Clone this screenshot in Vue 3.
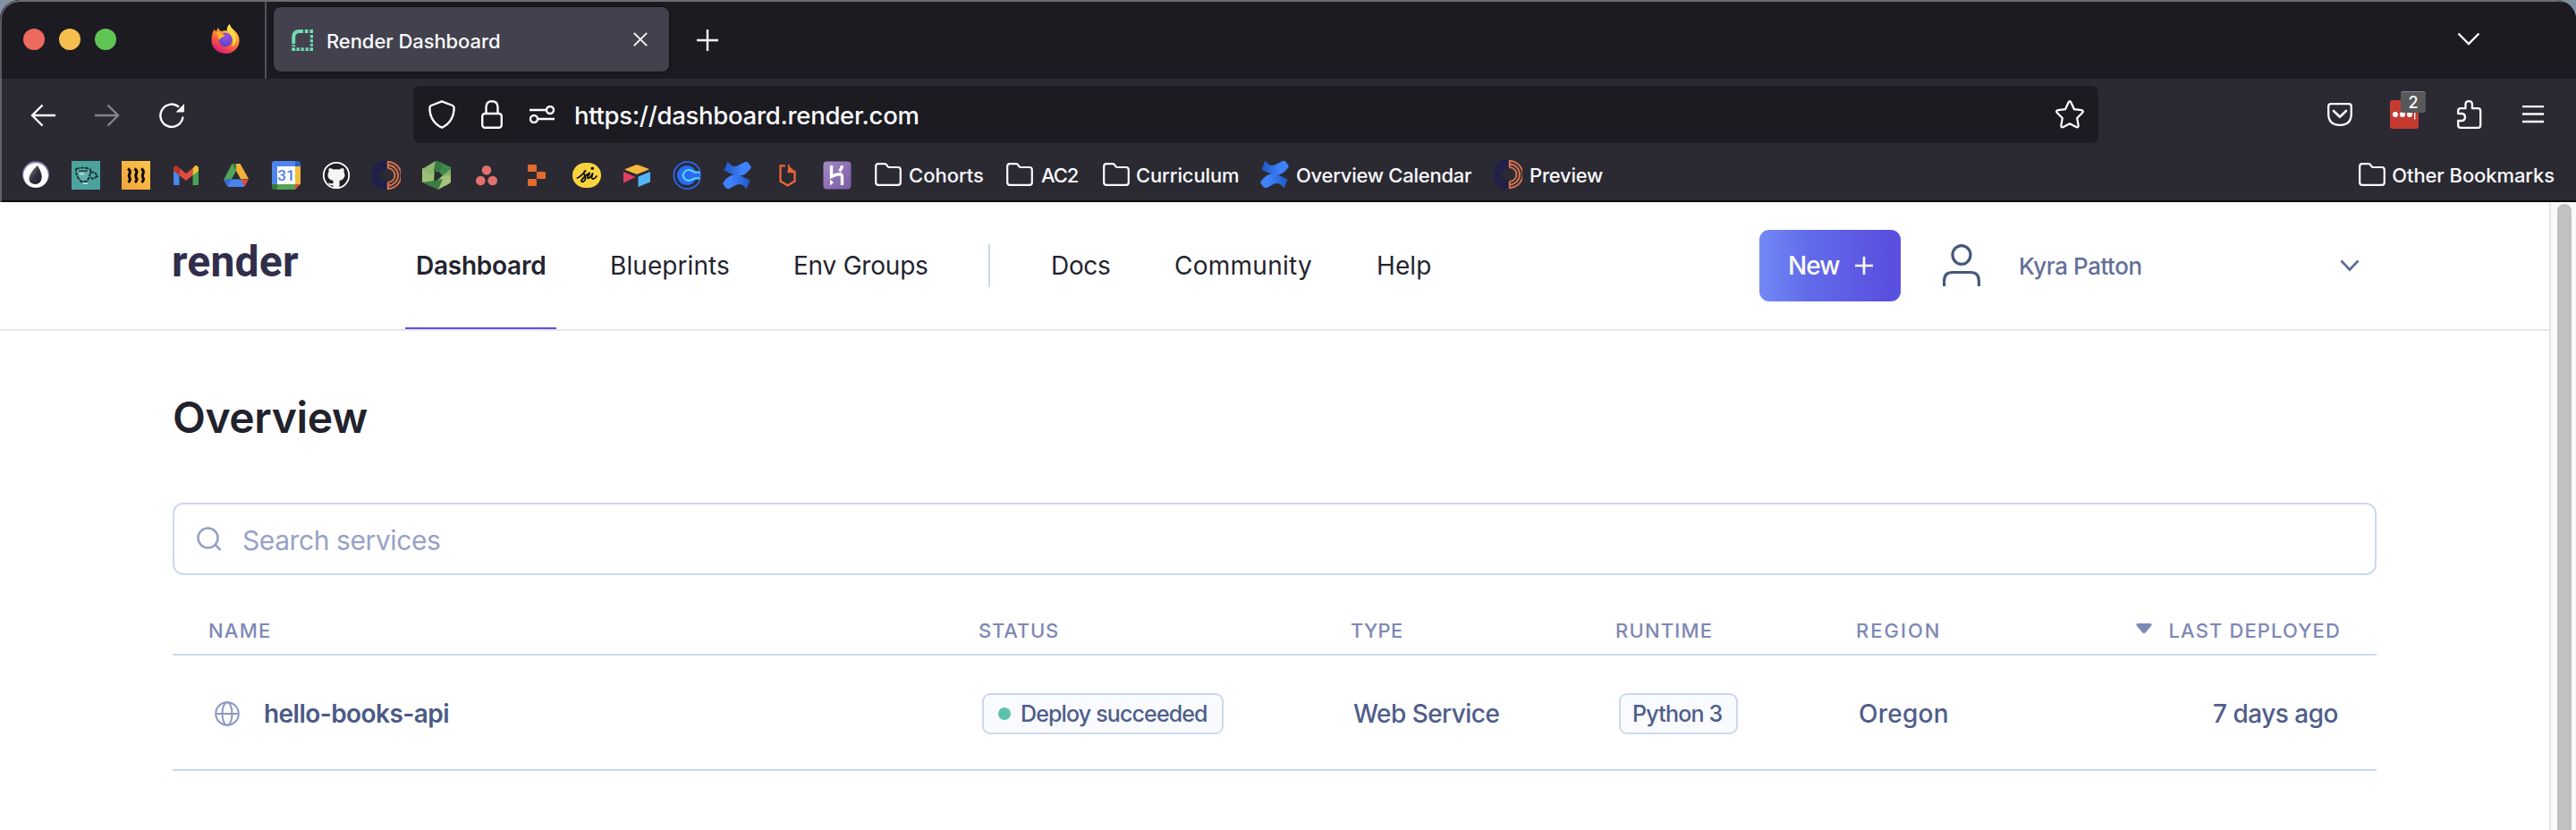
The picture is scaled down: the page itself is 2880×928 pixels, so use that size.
<script setup>
const primaryNav = [
  { label: 'Dashboard', cls: 'dashboard', active: true },
  { label: 'Blueprints', cls: 'blueprints' },
  { label: 'Env Groups', cls: 'groups' },
]
const secondaryNav = [
  { label: 'Docs', cls: 'docs' },
  { label: 'Community', cls: 'community' },
  { label: 'Help', cls: 'help' },
]
const columns = [
  { label: 'NAME', cls: 'h-name' },
  { label: 'STATUS', cls: 'h-status' },
  { label: 'TYPE', cls: 'h-type' },
  { label: 'RUNTIME', cls: 'h-runtime' },
  { label: 'REGION', cls: 'h-region' },
]
const services = [
  { name: 'hello-books-api', status: 'Deploy succeeded', type: 'Web Service', runtime: 'Python 3', region: 'Oregon', deployed: '7 days ago' },
]
const folders = [
  { label: 'Cohorts', cls: 'f-cohorts' },
  { label: 'AC2', cls: 'f-ac2' },
  { label: 'Curriculum', cls: 'f-curriculum' },
]
</script>

<template>
  <div class="window">
    <svg class="defs" width="0" height="0" aria-hidden="true">
      <defs>
        <linearGradient id="flame" x1=".8" y1="0" x2=".3" y2="1">
          <stop offset="0" stop-color="#fff44f" /><stop offset=".35" stop-color="#ffa436" />
          <stop offset=".65" stop-color="#ff5a3c" /><stop offset="1" stop-color="#d4157f" />
        </linearGradient>
        <radialGradient id="globe" cx=".55" cy=".3" r=".8">
          <stop offset="0" stop-color="#a04fe8" /><stop offset="1" stop-color="#4a43c4" />
        </radialGradient>
        <linearGradient id="confA" x1="0" y1="0" x2="1" y2="0"><stop offset="0" stop-color="#2058c8" /><stop offset=".7" stop-color="#3f83fb" /></linearGradient>
        <linearGradient id="confB" x1="1" y1="0" x2="0" y2="0"><stop offset="0" stop-color="#2058c8" /><stop offset=".7" stop-color="#3f83fb" /></linearGradient>
        <linearGradient id="amber" x1="1" y1="0" x2="0" y2="1"><stop offset="0" stop-color="#fbc54a" /><stop offset="1" stop-color="#f3a43c" /></linearGradient>
        <linearGradient id="drop" x1="0" y1="0" x2="1" y2="1"><stop offset="0" stop-color="#8a8a9a" /><stop offset=".5" stop-color="#32323f" /><stop offset="1" stop-color="#1c1c26" /></linearGradient>
        <linearGradient id="violet" x1="0" y1="0" x2="1" y2="1"><stop offset="0" stop-color="#a48ac6" /><stop offset="1" stop-color="#7a5aa2" /></linearGradient>
        <g id="confluence">
          <path d="M5.500 .5C10 7 14 7 19 4L25 1C28 0 30 4 32 7C27 15 20 19 12 15.500L1.500 10.500Z" fill="url(#confA)" />
          <path d="M26.500 31.500C22 25 18 25 13 28L7 31C4 32 2 28 0 25C5 17 12 13 20 16.500L30.500 21.500Z" fill="url(#confB)" />
        </g>
        <g id="rings" fill="none" stroke-width="1.900">
          <g stroke="#1b1b58"><path d="M15 1A15 15 0 0 0 15 31M15 4.500A11.500 11.500 0 0 0 15 27.500M15 8A8 8 0 0 0 15 24" /><path d="M14.600 0V8M14.600 24V32" /></g>
          <g stroke="#d9734f"><path d="M17.500 1A15 15 0 0 1 17.500 31M17.500 4.500A11.500 11.500 0 0 1 17.500 27.500M17.500 8A8 8 0 0 1 17.500 24" /><path d="M17.800 0V8M17.800 24V32" /></g>
        </g>
        <path id="folder" d="M4 1.200H11Q12.500 1.200 13.300 2.500L14.600 4.300Q15.100 5 16 5H26Q28.800 5 28.800 8V22Q28.800 24.800 26 24.800H4Q1.200 24.800 1.200 22V4Q1.200 1.200 4 1.200Z" fill="none" stroke="#fbfbfe" stroke-width="2.200" />
      </defs>
    </svg>

    <div class="tabstrip">
      <i class="light red"></i><i class="light yellow"></i><i class="light green"></i>
      <svg class="firefox" width="34" height="34" viewBox="0 0 34 34">
        <path d="M4.500 6Q6 7 7 8.500Q7 6 9 4Q10 8 13.500 8Q17 6 19 8Q18 4 21.500 0Q23 4 27 7Q33 12 32.500 19A15.500 14.500 0 0 1 17 33A15.500 14.500 0 0 1 1.500 18Q1.500 10 4.500 6Z" fill="url(#flame)" />
        <ellipse cx="17" cy="17.500" rx="7.500" ry="7.800" fill="url(#globe)" />
        <path d="M7 9Q12 9 17 13Q14 13 14 15Q11 15 10.500 18Q8 14 7 9Z" fill="#ffb52e" />
        <path d="M21.500 0Q25 8 28 12Q31 21 24 26Q29 15 19 8Q18 4 21.500 0Z" fill="#ffdc45" />
      </svg>
      <div class="strip-line"></div>
      <div class="tab">
        <svg width="24" height="24" viewBox="0 0 24 24">
          <path d="M2.200 16V9Q2.200 2 9 2H13" fill="none" stroke="#6fdcb4" stroke-width="4" />
          <g fill="#6fdcb4">
            <path d="M14.800 0h3.700v4h-3.700zM20.300 0H24v4h-3.700zM20.800 6H24v3.500h-3.200zM20.800 11H24v3.500h-3.200zM20.800 16H24v2.800h-3.200zM.2 17.200h4v1.800h-4zM.2 20.300h4V24h-4zM5.500 20.300h3.300V24H5.500zM10.500 20.300h3.300V24h-3.300zM15.500 20.300h3.300V24h-3.300zM20.300 20.300H24V24h-3.700z" />
          </g>
        </svg>
        <span class="tab-title">Render Dashboard</span>
        <svg class="tab-close" width="16" height="16" viewBox="0 0 16 16"><path d="M.8.8L15.200 15.200M15.200.8L.8 15.200" stroke="#fbfbfe" stroke-width="1.800" /></svg>
      </div>
      <svg class="new-tab" width="24" height="24" viewBox="0 0 24 24"><path d="M12 0V24M0 12H24" stroke="#fbfbfe" stroke-width="2.400" /></svg>
      <svg class="all-tabs" width="26" height="16" viewBox="0 0 26 16"><path d="M1.500 1.500L13 13L24.500 1.500" fill="none" stroke="#fbfbfe" stroke-width="2.400" /></svg>
    </div>

    <div class="toolbar">
      <svg class="back" width="28" height="26" viewBox="0 0 28 26"><path d="M28 13H2M13.500 1.500L2 13L13.500 24.500" fill="none" stroke="#fbfbfe" stroke-width="2.400" /></svg>
      <svg class="forward" width="28" height="26" viewBox="0 0 28 26"><path d="M0 13H26M14.500 1.500L26 13L14.500 24.500" fill="none" stroke="#85848b" stroke-width="2.400" /></svg>
      <svg class="reload" width="28" height="28" viewBox="0 0 28 28"><path d="M26.500 15.500A12.600 12.600 0 1 1 22 4.500" fill="none" stroke="#fbfbfe" stroke-width="2.400" /><path d="M28 1V9Q28 10.500 26.500 10.500H18.500Z" fill="#fbfbfe" /></svg>
      <div class="urlbar">
        <svg class="shield" width="30" height="32" viewBox="0 0 30 32"><path d="M15 1.300L27 6Q28.600 6.800 28.600 8.500Q28.600 24 15 30.700Q1.400 24 1.400 8.500Q1.400 6.800 3 6Z" fill="none" stroke="#fbfbfe" stroke-width="2.400" stroke-linejoin="round" /></svg>
        <svg class="lock" width="24" height="32" viewBox="0 0 24 32"><path d="M5.500 15V8Q5.500 1.300 12 1.300T18.500 8V15" fill="none" stroke="#fbfbfe" stroke-width="2.400" /><rect x="1.200" y="15" width="21.600" height="15.800" rx="3" fill="none" stroke="#fbfbfe" stroke-width="2.400" /></svg>
        <svg class="perm" width="30" height="20" viewBox="0 0 30 20"><g fill="none" stroke="#fbfbfe" stroke-width="2.400"><path d="M1 5H19M11 15H29" /><circle cx="24" cy="5" r="4" fill="#1c1b22" /><circle cx="6" cy="15" r="4" fill="#1c1b22" /></g></svg>
        <span class="url">https://dashboard.render.com</span>
        <svg class="star" width="32" height="32" viewBox="0 0 32 32"><path d="M14.600 2.500Q16 0 17.400 2.500L21 10.200L29 11.200Q32 12 30 14.200L24.200 20L25.600 28.200Q25.800 31 23.200 30L16 26.200L8.800 30Q6.200 31 6.400 28.200L7.800 20L2 14.200Q0 12 3 11.200L11 10.200Z" fill="none" stroke="#fbfbfe" stroke-width="2.300" stroke-linejoin="round" /></svg>
      </div>
      <svg class="pocket" width="28" height="26" viewBox="0 0 28 26"><path d="M4 1.200H24Q26.800 1.200 26.800 4V12Q26.800 24.800 14 24.800Q1.200 24.800 1.200 12V4Q1.200 1.200 4 1.200Z" fill="none" stroke="#fbfbfe" stroke-width="2.300" /><path d="M7 9L14 15.800L21 9" fill="none" stroke="#fbfbfe" stroke-width="2.600" stroke-linecap="round" stroke-linejoin="round" /></svg>
      <div class="lastpass">
        <svg width="32" height="32" viewBox="0 0 32 32"><rect width="32" height="32" rx="3" fill="#c53b32" /><g fill="#fff"><circle cx="6" cy="16" r="3" /><circle cx="14" cy="16" r="3" /><circle cx="22" cy="16" r="3" /><path d="M27 10.500h1.400v11H27z" /></g></svg>
        <span class="badge">2</span>
      </div>
      <svg class="puzzle" width="28" height="32" viewBox="0 0 28 32"><path d="M4 9.200H9.500V5Q9.500 1.200 13.200 1.200T17 5V9.200H23.500Q26.200 9.200 26.200 12V28Q26.200 30.800 23.500 30.800H4Q1.200 30.800 1.200 28V23H5.500Q9 22.600 9 19T5.500 15H1.200V12Q1.200 9.200 4 9.200Z" fill="none" stroke="#fbfbfe" stroke-width="2.300" stroke-linejoin="round" /></svg>
      <svg class="menu" width="24" height="20" viewBox="0 0 24 20"><path d="M0 1.200H24M0 9.500H24M0 18H24" stroke="#fbfbfe" stroke-width="2.300" /></svg>
    </div>

    <div class="bookmarks">
      <div class="icons">
        <svg viewBox="0 0 32 32"><circle cx="16" cy="16.500" r="15" fill="#17171c" /><circle cx="16" cy="15.300" r="15" fill="#8681b4" /><circle cx="16" cy="16" r="13.800" fill="#fff" /><path d="M18 5Q24 15 22.500 20Q21 26 15 26Q8 25 8.500 19Q10 12 18 5Z" fill="url(#drop)" /></svg>
        <svg viewBox="0 0 32 32"><rect width="32" height="32" fill="#4ca39e" /><path d="M5 9Q13 6 20 9.500L19 19L16 22H11L7 18Z" fill="#62aeaa" /><g fill="none" stroke="#14302f" stroke-width="1.800" stroke-dasharray="4 1"><path d="M5 9Q13 6 21 9.500V14Q19 20 17 23H11Q5 18 5 9Z" /><path d="M21 12L26 13L29 17L24 20L20 18" /></g><path d="M8 11H18" stroke="#1b3a39" stroke-width="1.400" /><path d="M9 14.500H14M13 25H18" stroke="#d6e8e6" stroke-width="1.600" /></svg>
        <svg viewBox="0 0 32 32"><rect width="32" height="32" fill="url(#amber)" /><g fill="none" stroke="#120d04" stroke-width="3"><path d="M7 8.500Q10.500 11 9 14T9 19T7.500 24" /><path d="M14.500 8.500Q18 11 16.500 14T16.500 19T15 24" /><path d="M22 8.500Q25.500 11 24 14T24 19T22.500 24" /></g></svg>
        <svg viewBox="0 0 32 32"><path d="M2 9V25.500Q2 27 3.500 27H8.500V14Z" fill="#4a86ee" /><path d="M30 9V25.500Q30 27 28.500 27H23.500V14Z" fill="#48a355" /><path d="M8.500 8L16 14L23.500 8V16L16 22L8.500 16Z" fill="#e04c3f" /><path d="M2 9Q2 5 5.500 5L8.500 8V16L2 11Z" fill="#bd352c" /><path d="M30 9Q30 5 26.500 5L23.500 8V16L30 11Z" fill="#f5bf37" /></svg>
        <svg viewBox="0 0 32 32"><path d="M11.500 3H16L16 11L6.500 28.500L2 21Z" fill="#4fa558" /><path d="M11.500 3H20.500L16 11Z" fill="#35783d" /><path d="M16 3H20.500L30 20H21L16 11Z" fill="#f2b137" /><path d="M7 20.500H25V29H7L2.500 21Z" fill="#4a84ee" /><path d="M21 20.500H30L25.500 28.500Z" fill="#dc4d3d" /><path d="M2 20.500H11L6.500 28.500Z" fill="#3a6bd6" /></svg>
        <svg viewBox="0 0 32 32"><path d="M3 0H26V6H6V26H0V3Q0 0 3 0Z" fill="#4f86ee" /><path d="M26 0H29Q32 0 32 3V6H26Z" fill="#2a5fc8" /><path d="M26 6H32V26H26Z" fill="#f5bd3f" /><path d="M0 26H6V32H3Q0 32 0 29Z" fill="#2f7a3b" /><path d="M6 26H26V32H6Z" fill="#54a356" /><path d="M26 26H32L26 32Z" fill="#dd4a3c" /><rect x="6" y="6" width="20" height="20" fill="#fff" /><text x="16" y="21.800" text-anchor="middle" class="cal">31</text></svg>
        <svg viewBox="0 0 32 32"><circle cx="16" cy="16" r="14.200" fill="#202028" stroke="#fff" stroke-width="1.800" /><path d="M8 8Q11 8 13 9.500Q16 9 19 9.500Q21 8 24 8Q25 11 24.500 12.500Q27 17 23 20.500Q21.500 21.500 19.500 22V30H12.500V27Q8 28 7 24.500Q10 25.500 12.500 25V22Q6 20.500 6.500 15Q6.500 13.500 7.500 12.500Q7 10 8 8Z" fill="#f4f4f6" /></svg>
        <svg viewBox="0 0 32 32"><use href="#rings" /></svg>
        <svg viewBox="0 0 32 32"><path d="M16 0L32 7L30 12L16 10Z" fill="#67a35c" /><path d="M19 1L32 8V24L23 17L16 9Z" fill="#3e8a4a" /><path d="M32 9V24L26 28L22 17Z" fill="#84b068" /><path d="M32 16V24L18 32L11 27L22 17Z" fill="#a3c47a" /><path d="M18 32L2 25V17L14 22L23 20Z" fill="#3c7d45" /><path d="M0 24V8L14 12L13 22Z" fill="#9fc078" /><path d="M0 9L15 0L21 10L8 16Z" fill="#8db870" /><path d="M15 0L23 2L20 12L13 10Z" fill="#36783f" /><path d="M13.500 9.500L22 16L14 21.500Z" fill="#26302b" /></svg>
        <svg viewBox="0 0 32 32" fill="#e2716e"><circle cx="16" cy="10.200" r="5.300" /><circle cx="9.300" cy="22" r="5.300" /><circle cx="22.700" cy="22" r="5.300" /></svg>
        <svg viewBox="0 0 32 32" fill="#e16b2c"><rect x="6" y="4" width="10" height="8" rx="1" /><rect x="16" y="12" width="10" height="8" rx="1" /><rect x="6" y="20" width="10" height="8" rx="1" /></svg>
        <svg viewBox="0 0 32 32"><rect y="2" width="32" height="28" rx="14.500" fill="#fad43f" /><path d="M5.500 19Q10 17 15 10.500Q11.500 12.500 13.500 15.500Q16 20 13 22.500Q10 24.500 10 21.500Q13 17.500 19.500 13L17 18Q17 21 20.500 17.500L23 13.500Q20.500 19 22.500 20Q24.500 20.500 27 17" fill="none" stroke="#15130a" stroke-width="1.900" stroke-linecap="round" /><circle cx="22.300" cy="8.200" r="1.700" fill="#15130a" /></svg>
        <svg viewBox="0 0 32 32"><path d="M3 9L15 4.300Q16 4 17 4.300L29 8.800Q30 9.300 29 9.800L17 14.500Q16 14.800 15 14.500L3 10Q2 9.500 3 9Z" fill="#f5b73c" /><path d="M17.500 17.500L31 12V23.500L17.500 29Z" fill="#54b5f6" /><path d="M1 12L14.500 18L1 24.500Z" fill="#e33f63" /></svg>
        <svg viewBox="0 0 32 32" fill="none"><path d="M30.500 11A15 15 0 1 0 30.500 21" stroke="#2a6af3" stroke-width="1.700" /><circle cx="16" cy="16" r="11" fill="#2a6af3" /><path d="M31 12H23V20H31Z" fill="#2b2a33" /><path d="M31 12.500H24L21.500 11Q17 9 14 11.500Q9.500 16 14 20.500Q17 23 21.500 21L24 19.500H31" stroke="#59d9f5" stroke-width="2" fill="#2a6af3" /><path d="M23 14.500H32V17.500H23Z" fill="#2a6af3" /></svg>
        <svg viewBox="0 0 32 32"><use href="#confluence" /></svg>
        <svg viewBox="0 0 32 32"><path d="M14 5.400H8.500V22.500L16.500 27.500L24.500 22.500V12H17.500V5Z" fill="none" stroke="#ee6339" stroke-width="2.300" /><path d="M14 4H17V10.800H14Z" fill="#2b2a33" /><path d="M17 4.500L25 12H17Z" fill="#ee6339" /></svg>
        <svg viewBox="0 0 32 32"><rect x=".5" y=".5" width="31" height="31" rx="4" fill="url(#violet)" /><path d="M9.500 5V17.500Q15 14.500 19 14.800Q21.500 15 21.500 18V27M21.500 5Q21.300 8.500 18.500 11.500" fill="none" stroke="#fff" stroke-width="3.400" /><path d="M8 20.500L12 24L8 27.500Z" fill="#fff" /></svg>
      </div>
      <div class="links">
        <span v-for="f in folders" :key="f.label" class="link" :class="f.cls">
          <svg width="30" height="26" viewBox="0 0 30 26"><use href="#folder" /></svg>{{ f.label }}
        </span>
        <span class="link f-overview"><svg width="32" height="32" viewBox="0 0 32 32"><use href="#confluence" /></svg>Overview Calendar</span>
        <span class="link f-preview"><svg width="32" height="32" viewBox="0 0 32 32"><use href="#rings" /></svg>Preview</span>
      </div>
      <span class="link f-other"><svg width="30" height="26" viewBox="0 0 30 26"><use href="#folder" /></svg>Other Bookmarks</span>
    </div>

    <div class="viewport">
      <div class="page">
        <header class="header">
          <span class="logo">render</span>
          <nav class="primary">
            <a v-for="n in primaryNav" :key="n.label" class="nav" :class="[n.cls, { active: n.active }]">{{ n.label }}</a>
          </nav>
          <i class="divider"></i>
          <nav class="secondary">
            <a v-for="n in secondaryNav" :key="n.label" class="nav" :class="n.cls">{{ n.label }}</a>
          </nav>
          <button class="new">New<svg width="22" height="22" viewBox="0 0 22 22"><path d="M11 1V21M1 11H21" stroke="#fff" stroke-width="2.600" /></svg></button>
          <div class="account">
            <span class="avatar"><svg width="42" height="48" viewBox="0 0 42 48"><g fill="none" stroke="#46587b" stroke-width="3.200"><ellipse cx="21" cy="12" rx="10" ry="10.300" /><path d="M1.600 47V41Q1.600 31.500 11 31.500H31Q40.400 31.500 40.400 41V47" /></g></svg></span>
            <span class="user">Kyra Patton</span>
            <svg class="caret" width="22" height="14" viewBox="0 0 22 14"><path d="M1.500 1.500L11 11.500L20.500 1.500" fill="none" stroke="#5f6b96" stroke-width="2.600" /></svg>
          </div>
        </header>
        <main class="main">
          <h1 class="title">Overview</h1>
          <div class="search">
            <svg width="28" height="28" viewBox="0 0 28 28"><circle cx="12.500" cy="12.500" r="11" fill="none" stroke="#93a0c6" stroke-width="2.500" /><path d="M20.500 20L26.500 26" stroke="#93a0c6" stroke-width="2.500" /></svg>
            <span>Search services</span>
          </div>
          <div class="table">
            <div class="row head">
              <span v-for="c in columns" :key="c.label" :class="c.cls">{{ c.label }}</span>
              <span class="h-last"><svg width="18" height="12" viewBox="0 0 18 12"><path d="M2 0H16Q18.500 .5 17 3L10.500 10.500Q9 12 7.500 10.500L1 3Q-.5 .5 2 0Z" fill="#7e88b4" /></svg>LAST DEPLOYED</span>
            </div>
            <div v-for="s in services" :key="s.name" class="row body">
              <span class="name"><svg width="28" height="28" viewBox="0 0 28 28"><g fill="none" stroke="#8d98c3" stroke-width="2"><circle cx="14" cy="14" r="12.800" /><ellipse cx="14" cy="14" rx="5.500" ry="12.800" /><path d="M1 14H27" /></g></svg>{{ s.name }}</span>
              <span class="status"><b class="pill pill-status"><i class="dot"></i>{{ s.status }}</b></span>
              <span class="type">{{ s.type }}</span>
              <span class="runtime"><b class="pill pill-runtime">{{ s.runtime }}</b></span>
              <span class="region">{{ s.region }}</span>
              <span class="last">{{ s.deployed }}</span>
            </div>
          </div>
        </main>
      </div>
      <div class="scrollbar"><i class="thumb"></i></div>
    </div>
  </div>
</template>

<style>
body { margin: 0; background: #8292a4; }
</style>

<style scoped>
* { box-sizing: border-box; }
.window { position: relative; width: 2880px; height: 928px; overflow: hidden; border-radius: 22px 22px 0 0; background: #1c1b22; font-family: Inter, "Liberation Sans", sans-serif; white-space: nowrap; display: flex; flex-direction: column; }
.window::after { content: ""; position: absolute; left: 0; top: 0; width: 2880px; height: 224px; border: 2px solid rgba(165, 165, 170, .45); border-top-color: #6d6d70; border-bottom: 0; border-radius: 22px 22px 0 0; pointer-events: none; }
.defs { position: absolute; }
svg { flex: none; display: block; }
i { flex: none; display: block; }

.tabstrip { height: 88px; flex: none; display: flex; align-items: center; padding-left: 26px; background: #1c1b22; }
.light { width: 24px; height: 24px; border-radius: 50%; margin-right: 16px; }
.red { background: #ed6a5e; }
.yellow { background: #f4bf4f; }
.green { background: #61c554; }
.firefox { margin-left: 89px; }
.strip-line { width: 2px; height: 86px; margin: 2px 0 0 27px; background: #52515a; }
.tab { width: 442px; height: 72px; margin-left: 8px; padding: 3px 0 0 20px; border-radius: 8px; background: #42414d; box-shadow: 0 0 5px rgba(0, 0, 0, .5); display: flex; align-items: center; }
.tab-title { width: 343px; margin-left: 15px; font-size: 22px; font-weight: 500; line-height: 28px; letter-spacing: -.08px; color: #fbfbfe; }
.tab > svg { margin-bottom: 1px; }
.tab .tab-close { margin-bottom: 3px; }
.new-tab { margin: 2px 0 0 31px; }
.all-tabs { margin-left: auto; margin-right: 107px; }

.toolbar { height: 80px; flex: none; background: #2b2a33; display: flex; align-items: center; padding-left: 34px; }
.back, .reload { margin-top: 2px; }
.forward { margin: 2px 44px 0; }
.urlbar { width: 1884px; height: 64px; margin-left: 256px; padding-left: 17px; border-radius: 8px; background: #1c1b22; display: flex; align-items: center; }
.lock { margin-left: 29px; }
.perm { margin-left: 29px; }
.url { width: 1656px; margin-left: 21px; padding-top: 2px; font-size: 27.500px; font-weight: 500; line-height: 36px; letter-spacing: -.300px; color: #fbfbfe; }
.pocket { margin-left: 256px; }
.lastpass { position: relative; margin-left: 42px; }
.badge { position: absolute; left: 12px; top: -10px; width: 28px; height: 24px; border-radius: 3px; background: #58585a; border-top: 1px solid #858587; font-size: 18px; font-weight: 500; line-height: 23px; text-align: center; color: #fff; }
.puzzle { margin-left: 43px; }
.menu { margin-left: 45px; }

.bookmarks { height: 58px; flex: none; background: #2b2a33; border-bottom: 2px solid #0c0c0d; display: flex; align-items: center; padding-left: 24px; }
.icons { display: flex; gap: 24px; }
.icons svg { width: 32px; height: 32px; }
.cal { font: 500 17px Roboto, sans-serif; fill: #4a7fe6; }
.links { display: grid; grid-template-columns: 147px 108px 176px 261px 130px; margin-left: 26px; align-items: center; }
.link { display: flex; align-items: center; gap: 8px; font-size: 22px; font-weight: 500; line-height: 28px; color: #fbfbfe; }
.link > svg { margin-top: -2px; }
.f-ac2 { gap: 9px; letter-spacing: -1.100px; }
.f-curriculum { gap: 7px; letter-spacing: -.130px; }
.f-overview { letter-spacing: -.260px; }
.f-preview { letter-spacing: -.240px; }
.f-other { gap: 7px; margin-left: auto; margin-right: 24px; letter-spacing: -.100px; }

.viewport { flex: 1; display: flex; background: #fff; }
.page { width: 2850px; background: #fff; }
.header { height: 144px; display: flex; align-items: center; border-bottom: 2px solid #e0e8f5; color: #23242f; }
.logo { width: 259px; margin: -9px 0 0 192px; font: 700 48px/56px Roboto, sans-serif; letter-spacing: .220px; color: #302e4b; }
.primary { display: flex; height: 142px; }
.secondary { display: flex; height: 142px; margin-left: 68px; }
.nav { font-size: 28px; line-height: 142px; }
.dashboard { width: 169px; margin-left: 2px; padding-left: 12px; font-weight: 600; letter-spacing: -.250px; }
.active { border-bottom: 2px solid #5a4fe0; }
.blueprints { margin-left: 60px; width: 205px; letter-spacing: .080px; }
.groups { width: 218px; letter-spacing: -.220px; }
.divider { width: 2px; height: 48px; background: #ccd8ee; }
.docs { width: 138px; letter-spacing: -.330px; }
.community { width: 226px; letter-spacing: .260px; }
.help { width: 99px; letter-spacing: .100px; }
.new { width: 158px; height: 80px; margin-left: 329px; padding: 0 0 0 32px; border: 0; border-radius: 11px; background: linear-gradient(90deg, #7389f5, #616bea 35%, #5a50e0 90%); display: flex; align-items: center; gap: 17px; font: 500 28px/36px Inter, sans-serif; letter-spacing: -1.000px; color: #fff; }
.account { display: flex; align-items: center; }
.avatar { width: 80px; height: 80px; margin-left: 28px; border-radius: 10px; display: flex; align-items: center; justify-content: center; }
.user { width: 359px; margin: 1px 0 0 24px; font-size: 26px; font-weight: 500; line-height: 36px; letter-spacing: -.480px; color: #64709a; }

.main { width: 2464px; margin-left: 193px; }
.title { margin: 67px 0 0; font-size: 48px; font-weight: 600; line-height: 60px; letter-spacing: -.400px; color: #21222d; }
.search { height: 81px; margin-top: 65px; padding-left: 25px; border: 2px solid #ccd8ee; border-radius: 12px; display: flex; align-items: center; gap: 23px; font-size: 30px; line-height: 40px; letter-spacing: -.420px; color: #98a2c6; }
.search span { padding-top: 2px; }
.row { display: grid; grid-template-columns: 901px 416px 295px 269px 583px; align-items: center; border-bottom: 2px solid #ccd8ee; }
.row > span { grid-row: 1; display: flex; align-items: center; }
.head { height: 90px; padding-top: 35px; font-size: 22px; font-weight: 500; line-height: 28px; color: #7e88b4; }
.h-name { padding-left: 40px; letter-spacing: 1.200px; }
.h-status { letter-spacing: .800px; }
.h-type { letter-spacing: .280px; }
.h-runtime { padding-left: 1px; letter-spacing: 1.200px; }
.h-region { grid-column: 5; padding-left: 1px; letter-spacing: 2.000px; }
.h-last { grid-column: 5; justify-self: end; padding-right: 40px; gap: 18px; letter-spacing: 1.120px; }
.h-last svg { margin-top: -4px; }
.body { height: 129px; padding-top: 2px; font-size: 28px; font-weight: 500; line-height: 36px; color: #4f5e8a; }
.name { padding-left: 47px; gap: 27px; font-weight: 600; letter-spacing: -.550px; color: #4b5a87; }
.status { padding-left: 4px; }
.type { padding-left: 3px; letter-spacing: -.560px; }
.runtime { padding-left: 5px; }
.region { grid-column: 5; padding-left: 4px; letter-spacing: .250px; }
.last { grid-column: 5; justify-self: end; padding-right: 43px; letter-spacing: -.500px; }
.pill { height: 46px; border: 2px solid #ccd8ee; border-radius: 9px; background: #f9fbfe; display: flex; align-items: center; font-size: 25px; font-weight: 500; }
.pill-status { width: 270px; padding-left: 16px; letter-spacing: -.860px; }
.pill-runtime { width: 133px; padding-left: 13px; letter-spacing: -.800px; }
.dot { width: 14px; height: 14px; margin-right: 11px; border-radius: 50%; background: #5cc2ae; }

.scrollbar { width: 30px; padding: 2px 0 0 7px; border-left: 2px solid #e7e7e7; background: #fafafa; }
.thumb { width: 16px; height: 760px; border-radius: 8px; background: #c1c1c1; }
</style>
